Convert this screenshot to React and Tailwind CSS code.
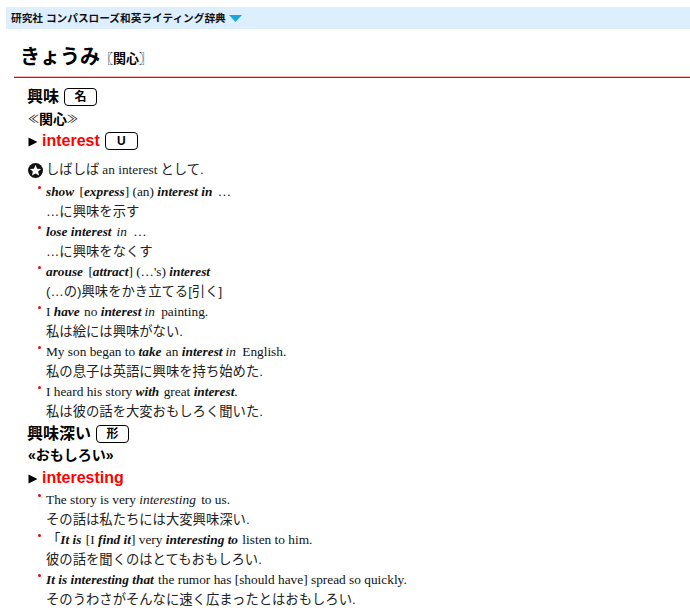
import React from "react";

const sans = "font-['Liberation_Sans','Noto_Sans_CJK_JP',sans-serif]";
const serif = "font-['Liberation_Serif','Noto_Sans_CJK_JP',serif]";

function Badge({ children }) {
  return (
    <span className="ml-[5px] inline-flex h-[18px] w-[33px] items-center justify-center rounded-[4px] border border-black text-[12px] font-bold leading-none">
      {children}
    </span>
  );
}

function B({ children }) {
  return <b className="italic font-bold">{children}</b>;
}

function I({ children }) {
  return <i className="mx-[3px]">{children}</i>;
}

// one example: english line with red dot + japanese line
function Example({ en, ja }) {
  return (
    <div className="pl-[38px]">
      <div className={`relative h-5 pl-[8px] text-[13.33px] leading-5 text-[#111] ${serif}`}>
        <span className="absolute left-0 top-[4px] h-[3px] w-[3px] rounded-full bg-[#f00]" />
        {en}
      </div>
      <div className={`h-5 pl-[8px] text-[13.33px] leading-5 text-[#222] ${sans}`}>{ja}</div>
    </div>
  );
}

function Head({ word, pos }) {
  return (
    <div className="flex h-[23px] items-center pl-[27px] text-[16px] font-bold text-black">
      <span>{word}</span>
      <Badge>{pos}</Badge>
    </div>
  );
}

function Gloss({ children, className = "" }) {
  return <div className={`flex h-[22px] items-center pl-[28px] text-[14px] font-bold text-black ${className}`}>{children}</div>;
}

function Trans({ word, pos }) {
  return (
    <div className="flex h-[22px] items-center pl-[28px]">
      <svg width="10" height="10" viewBox="0 0 10 10" className="mr-[4px] mt-[2px]">
        <path d="M0.5 0.5 L9.5 5 L0.5 9.5 Z" fill="#000" />
      </svg>
      <span className={`text-[16px] font-bold text-[#f00] ${sans}`}>{word}</span>
      {pos && <Badge>{pos}</Badge>}
    </div>
  );
}

export default function App() {
  return (
    <div className={`h-[610px] w-[690px] overflow-hidden bg-white text-black ${sans}`}>
      <div className="pl-[6px] pt-[7px]">
        <div className="flex h-[22px] items-center bg-[#ddeeff] pl-[5px] text-[10.67px] font-bold text-[#111]">
          研究社 コンパスローズ和英ライティング辞典
          <svg width="13" height="7" viewBox="0 0 13 7" className="ml-[3px]">
            <path d="M0 0 H13 L6.5 7 Z" fill="#1aa7d8" />
          </svg>
        </div>
      </div>
      <div className="ml-[14px] flex h-[47px] items-center pl-[6px] pt-[9px]">
        <span className="text-[20px] font-bold">きょうみ</span>
        <span className="mt-[3px] text-[13px] font-bold">〖関心〗</span>
      </div>
      <div className="ml-[14px] h-[2px] border-t border-[#ffb4b4] bg-[#f00]" />
      <div className="pt-[7px]">
        <Head word="興味" pos="名" />
        <Gloss>
          <span className="text-[11px] font-normal">≪</span>関心<span className="text-[11px] font-normal">≫</span>
        </Gloss>
        <Trans word="interest" pos="U" />
        <div className="flex h-[30px] items-center pl-[28px] pt-[6px] text-[13.33px] text-[#222]">
          <svg width="15" height="15" viewBox="0 0 16 16" className="mr-[3px]">
            <circle cx="8" cy="8" r="8" fill="#111" />
            <path d="M8 1.8 L9.7 6 L14 6.3 L10.8 9.1 L11.8 13.4 L8 11.1 L4.2 13.4 L5.2 9.1 L2 6.3 L6.3 6 Z" fill="#fff" />
          </svg>
          しばしば<span className={`mx-[3px] ${serif}`}>an interest</span>として.
        </div>
        <Example en={<><B>show</B> <span className="ml-[2px]">[<B>express</B>]</span> (an) <B>interest in</B> <span className="ml-[2px]">…</span></>} ja="…に興味を示す" />
        <Example en={<><B>lose interest</B><i className="ml-[5px] mr-[3px]">in</i> …</>} ja="…に興味をなくす" />
        <Example en={<><B>arouse</B> <span className="ml-[2px]">[<B>attract</B>]</span> (…'s) <B>interest</B></>} ja="(…の)興味をかき立てる[引く]" />
        <Example en={<>I <B>have</B> <span className="ml-[1px]">no</span> <B>interest</B><I>in</I> painting.</>} ja="私は絵には興味がない." />
        <Example en={<>My son began to <B>take</B> <span className="ml-[1px]">an</span> <B>interest</B><I>in</I> English.</>} ja="私の息子は英語に興味を持ち始めた." />
        <Example en={<>I heard his story <B>with</B> <span className="ml-[1px]">great</span> <B>interest</B>.</>} ja="私は彼の話を大変おもしろく聞いた." />
        <Head word="興味深い" pos="形" />
        <Gloss className="pb-[2px]">«おもしろい»</Gloss>
        <Trans word="interesting" />
        <div className="mt-px">
          <Example en={<>The story is very <i className="mr-[2px]">interesting</i> to us.</>} ja="その話は私たちには大変興味深い." />
          <Example en={<><span className="ml-px">「</span><B>It is</B> <span className="ml-[1px]">[I <B>find it</B>]</span> very <B>interesting to</B> <span className="ml-[1px]">listen to him.</span></>} ja="彼の話を聞くのはとてもおもしろい." />
          <Example en={<><B>It is interesting that</B> <span className="ml-[1px]">the rumor has [should have] spread so quickly.</span></>} ja="そのうわさがそんなに速く広まったとはおもしろい." />
        </div>
      </div>
    </div>
  );
}
